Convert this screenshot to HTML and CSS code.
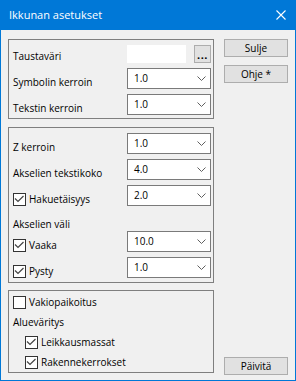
FILE: index.html
```html
<!DOCTYPE html>
<html lang="fi">
<head>
  <meta charset="UTF-8">
  <title>Ikkunan asetukset</title>
  <link rel="stylesheet" href="styles.css">
</head>
<body>
  <div class="window">
    <!-- Title bar -->
    <div class="titlebar">
      <span class="title">Ikkunan asetukset</span>
      <svg class="close" width="10" height="10" viewBox="0 0 10 10">
        <path d="M0.5 0.5 L9.5 9.5 M9.5 0.5 L0.5 9.5" stroke="#fff" stroke-width="1.1" fill="none"/>
      </svg>
    </div>

    <div class="content">
      <div class="groups">
        <!-- View -->
        <div class="group group-view">
          <div class="row row-color">
            <span class="label">Taustaväri</span>
            <div class="color-pick">
              <span class="swatch"></span>
              <button class="btn btn-dots">...</button>
            </div>
          </div>
          <div class="row">
            <span class="label">Symbolin kerroin</span>
            <div class="combo"><span>1.0</span><svg class="chevron" width="9" height="5" viewBox="0 0 9 5"><path d="M0.5 0.5 L4.5 4.5 L8.5 0.5" /></svg></div>
          </div>
          <div class="row">
            <span class="label">Tekstin kerroin</span>
            <div class="combo"><span>1.0</span><svg class="chevron" width="9" height="5" viewBox="0 0 9 5"><path d="M0.5 0.5 L4.5 4.5 L8.5 0.5" /></svg></div>
          </div>
        </div>

        <!-- Axes -->
        <div class="group group-axes">
          <div class="row">
            <span class="label">Z kerroin</span>
            <div class="combo"><span>1.0</span><svg class="chevron" width="9" height="5" viewBox="0 0 9 5"><path d="M0.5 0.5 L4.5 4.5 L8.5 0.5" /></svg></div>
          </div>
          <div class="row">
            <span class="label">Akselien tekstikoko</span>
            <div class="combo"><span>4.0</span><svg class="chevron" width="9" height="5" viewBox="0 0 9 5"><path d="M0.5 0.5 L4.5 4.5 L8.5 0.5" /></svg></div>
          </div>
          <div class="row">
            <label class="check">
              <span class="box"><svg width="11" height="11" viewBox="0 0 11 11"><polyline points="1,4.5 4,7.5 9.5,2" /></svg></span>
              Hakuetäisyys
            </label>
            <div class="combo"><span>2.0</span><svg class="chevron" width="9" height="5" viewBox="0 0 9 5"><path d="M0.5 0.5 L4.5 4.5 L8.5 0.5" /></svg></div>
          </div>
          <div class="caption">Akselien väli</div>
          <div class="row">
            <label class="check">
              <span class="box"><svg width="11" height="11" viewBox="0 0 11 11"><polyline points="1,4.5 4,7.5 9.5,2" /></svg></span>
              Vaaka
            </label>
            <div class="combo"><span>10.0</span><svg class="chevron" width="9" height="5" viewBox="0 0 9 5"><path d="M0.5 0.5 L4.5 4.5 L8.5 0.5" /></svg></div>
          </div>
          <div class="row">
            <label class="check">
              <span class="box"><svg width="11" height="11" viewBox="0 0 11 11"><polyline points="1,4.5 4,7.5 9.5,2" /></svg></span>
              Pysty
            </label>
            <div class="combo"><span>1.0</span><svg class="chevron" width="9" height="5" viewBox="0 0 9 5"><path d="M0.5 0.5 L4.5 4.5 L8.5 0.5" /></svg></div>
          </div>
        </div>

        <!-- Fill -->
        <div class="group group-fill">
          <div class="line">
            <label class="check"><span class="box"></span>Vakiopaikoitus</label>
          </div>
          <div class="line">Alueväritys</div>
          <div class="line indent">
            <label class="check">
              <span class="box"><svg width="11" height="11" viewBox="0 0 11 11"><polyline points="1,4.5 4,7.5 9.5,2" /></svg></span>
              Leikkausmassat
            </label>
          </div>
          <div class="line indent">
            <label class="check">
              <span class="box"><svg width="11" height="11" viewBox="0 0 11 11"><polyline points="1,4.5 4,7.5 9.5,2" /></svg></span>
              Rakennekerrokset
            </label>
          </div>
        </div>
      </div>

      <div class="actions">
        <button class="btn">Sulje</button>
        <button class="btn btn-help">Ohje *</button>
        <button class="btn btn-update">Päivitä</button>
      </div>
    </div>
  </div>
</body>
</html>
```

FILE: styles.css
```css
/* General */
body {
  margin: 0;
  font-family: "Open Sans", "Noto Sans", sans-serif;
  font-size: 10px;
  line-height: 14px;
  color: #000;
}

.window {
  width: 296px;
  height: 381px;
  box-sizing: border-box;
  background: #0078d7;
  padding: 0 1px 1px;
  display: flex;
  flex-direction: column;
}

/* Title bar */
.titlebar {
  height: 30px;
  display: flex;
  align-items: center;
  justify-content: space-between;
  padding: 0 9px 0 8px;
  color: #fff;
}

.title {
  font-size: 11px;
  line-height: 30px;
}

/* Content */
.content {
  flex: 1;
  background: #f0f0f0;
  padding: 9px 7px 5px 7px;
  display: flex;
  gap: 10px;
}

.groups {
  width: 206px;
  display: flex;
  flex-direction: column;
}

.group {
  border: 1px solid #7f7f7f;
  padding: 0 2px 0 4px;
}

.group-view {
  padding-top: 5px;
  padding-bottom: 3px;
}

.group-axes {
  margin-top: 8px;
  padding-top: 5px;
  padding-bottom: 4px;
}

.group-fill {
  margin-top: 7px;
  padding-top: 1px;
}

/* Rows */
.row {
  height: 21px;
  display: flex;
  align-items: flex-end;
  justify-content: space-between;
}

.row + .row {
  margin-top: 5px;
}

.row-color {
  height: 18px;
  margin-bottom: 2px;
}

.caption {
  margin-top: 11px;
}

.caption + .row {
  margin-top: 0;
}

.line {
  height: 20px;
  display: flex;
  align-items: center;
}

.indent {
  padding-left: 12px;
}

/* Controls */
.color-pick {
  width: 84px;
  height: 18px;
  display: flex;
  justify-content: space-between;
}

.swatch {
  width: 59px;
  background: #fff;
}

.combo {
  width: 84px;
  height: 21px;
  box-sizing: border-box;
  border: 1px solid #7a7a7a;
  background: #fff;
  display: flex;
  align-items: center;
  justify-content: space-between;
  padding: 0 4px 1px 6px;
}

.chevron path {
  stroke: #606060;
  stroke-width: 1;
  fill: none;
}

.check {
  display: flex;
  align-items: center;
  gap: 3px;
}

.box {
  width: 13px;
  height: 13px;
  box-sizing: border-box;
  border: 1px solid #333;
  background: #fff;
  display: flex;
}

.box polyline {
  fill: none;
  stroke: #444;
  stroke-width: 1.2;
}

/* Buttons */
.btn {
  font: inherit;
  color: #000;
  background: #e1e1e1;
  border: 1px solid #adadad;
  padding: 0;
  height: 18px;
  line-height: 16px;
}

.btn-dots {
  width: 17px;
  font-size: 11px;
  font-weight: bold;
  letter-spacing: 0.5px;
  line-height: 18px;
}

.actions {
  width: 64px;
  display: flex;
  flex-direction: column;
}

.btn-help {
  margin-top: 8px;
}

.btn-update {
  margin-top: auto;
}
```
